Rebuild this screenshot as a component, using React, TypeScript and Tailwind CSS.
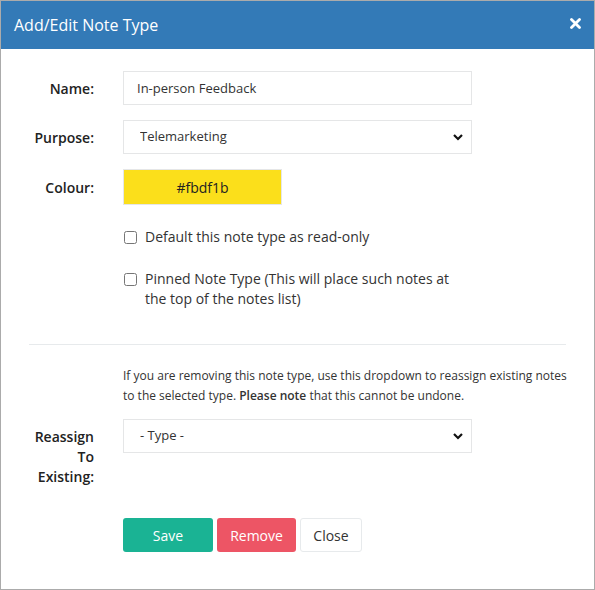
import React from "react";

const Chevron = () => (
  <svg width="10" height="8" viewBox="0 0 10 8" className="absolute right-[9px] top-1/2 -translate-y-1/2 pointer-events-none">
    <path d="M1 2 L5 6 L9 2" fill="none" stroke="#111" strokeWidth="2.2" />
  </svg>
);

export default function App() {
  return (
    <div className="w-[595px] h-[590px] border border-[#ababab] bg-white text-[#333]" style={{ fontFamily: '"Open Sans", sans-serif' }}>
      <div className="h-[48px] bg-[#337ab7] flex items-center justify-between pl-[13px] pr-[13px]">
        <div className="text-white text-[16px]">Add/Edit Note Type</div>
        <svg width="11" height="11" viewBox="0 0 11 11" className="mb-[4px]">
          <path d="M1.5 1.5 L9.5 9.5 M9.5 1.5 L1.5 9.5" stroke="#fff" strokeWidth="2.8" strokeLinecap="round" />
        </svg>
      </div>
      <div className="pt-[22px]">
        <div className="flex items-center h-[34px]">
          <label className="w-[122px] pr-[29px] text-right font-semibold text-[14px] text-[#222]">Name:</label>
          <input readOnly value="In-person Feedback" className="w-[349px] h-[34px] border border-[#e5e6e7] px-[13px] text-[13px] text-[#333] outline-none" />
        </div>
        <div className="flex items-center h-[34px] mt-[15px]">
          <label className="w-[122px] pr-[29px] text-right font-semibold text-[14px] text-[#222]">Purpose:</label>
          <div className="relative w-[349px] h-[34px]">
            <select className="appearance-none w-full h-full border border-[#e5e6e7] pl-[16px] text-[13px] text-[#333] bg-white outline-none">
              <option>Telemarketing</option>
            </select>
            <Chevron />
          </div>
        </div>
        <div className="flex items-center h-[36px] mt-[15px]">
          <label className="w-[122px] pr-[29px] text-right font-semibold text-[14px] text-[#222]">Colour:</label>
          <div className="w-[159px] h-[36px] bg-[#fbdf1b] border border-[#e5e6e7] flex items-center justify-center text-[14px] text-[#222]">#fbdf1b</div>
        </div>
        <div className="pl-[122px] mt-[22px]">
          <label className="flex items-center gap-[8px] text-[14px] leading-[20px] text-[#333]">
            <input type="checkbox" className="w-[13px] h-[13px] m-0 ml-[1px]" />
            <span>Default this note type as read-only</span>
          </label>
          <label className="flex items-start gap-[8px] text-[14px] leading-[20px] text-[#333] mt-[22px] w-[340px]">
            <input type="checkbox" className="w-[13px] h-[13px] m-0 mt-[4px] ml-[1px] shrink-0" />
            <span>Pinned Note Type (This will place such notes at the top of the notes list)</span>
          </label>
        </div>
        <div className="mx-[28px] mt-[35px] border-t border-[#e7eaec]" />
        <div className="pl-[122px] mt-[21px] w-[566px] text-[12px] leading-[20px] text-[#333]">
          If you are removing this note type, use this dropdown to reassign existing notes to the selected type. <b className="font-semibold">Please note</b> that this cannot be undone.
        </div>
        <div className="flex items-start mt-[13px]">
          <div className="w-[122px] flex justify-end pr-[29px] pt-[8px]">
            <label className="w-[60px] text-right font-semibold text-[14px] leading-[20px] text-[#222]">Reassign To Existing:</label>
          </div>
          <div className="relative w-[349px] h-[34px]">
            <select className="appearance-none w-full h-full border border-[#e5e6e7] pl-[16px] text-[13px] text-[#333] bg-white outline-none">
              <option>- Type -</option>
            </select>
            <Chevron />
          </div>
        </div>
        <div className="pl-[122px] mt-[31px] flex gap-[4px] text-[14px]">
          <button className="w-[90px] h-[34px] rounded-[3px] bg-[#1ab394] text-white">Save</button>
          <button className="w-[79px] h-[34px] rounded-[3px] bg-[#ed5565] text-white">Remove</button>
          <button className="w-[62px] h-[34px] rounded-[3px] bg-white border border-[#e7eaec] text-[#333]">Close</button>
        </div>
      </div>
    </div>
  );
}
